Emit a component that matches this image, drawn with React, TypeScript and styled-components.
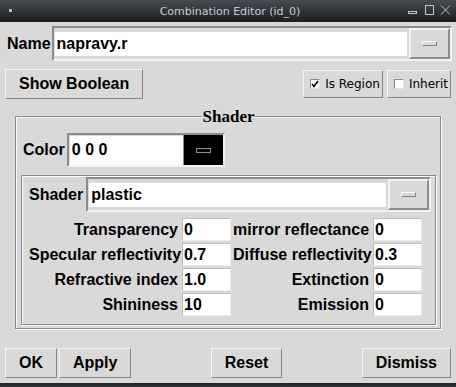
import React from 'react';
import styled, { createGlobalStyle } from 'styled-components';

const GlobalStyle = createGlobalStyle`
  html, body {
    margin: 0;
    padding: 0;
    background: #1b1e22;
  }
  #root {
    width: 456px;
    height: 387px;
  }
`;

const Window = styled.div`
  width: 456px;
  height: 387px;
  display: flex;
  flex-direction: column;
  background: #d9d9d9;
  overflow: hidden;
`;

const TitleBar = styled.div`
  height: 22px;
  flex: none;
  display: grid;
  grid-template-columns: 1fr auto 1fr;
  align-items: center;
  background: linear-gradient(#474c53, #1a1d21);
  color: #c8cbcf;
  font: 11px "DejaVu Sans", sans-serif;
  padding: 0 5px 0 9px;
`;

const TitleText = styled.div`
  text-align: center;
  white-space: nowrap;
`;

const WinControls = styled.div`
  display: flex;
  justify-content: flex-end;
`;

const Body = styled.div`
  flex: 1;
  display: flex;
  flex-direction: column;
  padding: 4px 5px 5px 5px;
  font-family: "Liberation Sans", Arial, sans-serif;
  color: #000;
`;

const BottomEdge = styled.div`
  height: 4px;
  flex: none;
  background: linear-gradient(#1f2327, #2f343a);
`;

const Label = styled.div`
  font-weight: bold;
  font-size: 16px;
  white-space: nowrap;
`;

const NameRow = styled.div`
  display: flex;
  align-items: center;
  gap: 1px;
  padding-left: 2px;
  margin-right: -1px;
`;

const SunkenFrame = styled.div<{ $w?: number }>`
  box-sizing: border-box;
  height: ${p => (p.$w ? 34 : 35)}px;
  ${p => (p.$w ? `width: ${p.$w}px;` : 'flex: 1;')}
  display: flex;
  align-items: stretch;
  border: 2px solid;
  border-color: #8b8b8b #f2f2f2 #f2f2f2 #8b8b8b;
`;

const Entry = styled.div`
  flex: 1;
  align-self: center;
  height: 24px;
  margin-left: 1px;
  padding-left: 2px;
  background: #fff;
  font-weight: bold;
  font-size: 16px;
  line-height: 24px;
`;

const MenuButton = styled.div`
  box-sizing: border-box;
  width: 41px;
  margin-left: 2px;
  display: flex;
  align-items: center;
  justify-content: center;
  border: 2px solid;
  border-color: #f4f4f4 #8b8b8b #8b8b8b #f4f4f4;
`;

const Indicator = styled.span`
  box-sizing: border-box;
  width: 15px;
  height: 5px;
  border: 1px solid;
  border-color: #fafafa #7f7f7f #7f7f7f #fafafa;
  background: #d9d9d9;
`;

const ActionRow = styled.div`
  display: flex;
  align-items: center;
  margin-top: 8px;
`;

const Button = styled.div`
  box-sizing: border-box;
  height: 30px;
  padding: 0 13px;
  display: flex;
  align-items: center;
  justify-content: center;
  border: 1px solid;
  border-color: #f6f6f6 #858585 #858585 #f6f6f6;
  font-weight: bold;
  font-size: 16px;
  white-space: nowrap;
`;

const Spacer = styled.div`
  flex: 1;
`;

const CheckButton = styled.div`
  box-sizing: border-box;
  height: 28px;
  padding: 0 2px 0 6px;
  margin-left: 4px;
  display: flex;
  align-items: center;
  gap: 5px;
  border: 1px solid;
  border-color: #f6f6f6 #858585 #858585 #f6f6f6;
  font: 12px "DejaVu Sans", sans-serif;
  white-space: nowrap;
`;

const CheckBox = styled.span`
  box-sizing: border-box;
  width: 10px;
  height: 10px;
  display: flex;
  align-items: center;
  justify-content: center;
  background: #fff;
  border: 1px solid;
  border-color: #8b8b8b #e6e6e6 #e6e6e6 #8b8b8b;
`;

const GroupBox = styled.fieldset`
  margin: 8px 10px 0 10px;
  padding: 0 4px 3px 5px;
  border: 1px solid #8b8b8b;
  box-shadow: inset 1px 1px 0 #fdfdfd, 1px 1px 0 #fdfdfd;
`;

const GroupTitle = styled.legend`
  margin: 0 auto;
  padding: 0 1px;
  background: #d9d9d9;
  font: bold 17px "Liberation Serif", "Times New Roman", serif;
  line-height: 19px;
`;

const ColorRow = styled.div`
  display: flex;
  align-items: center;
  gap: 2px;
  padding-left: 2px;
  margin-top: 7px;
`;

const ColorEntry = styled.div`
  flex: 1;
  margin: 1px 0 0 1px;
  background: #fff;
  font-weight: bold;
  font-size: 16px;
  line-height: 28px;
  padding-left: 2px;
`;

const Swatch = styled.div`
  width: 39px;
  display: flex;
  align-items: center;
  justify-content: center;
  background: #000;
  border-left: 1px solid #8b8b8b;
`;

const SwatchMark = styled.span`
  box-sizing: border-box;
  width: 15px;
  height: 5px;
  border: 1px solid #8f8f8f;
`;

const InnerBox = styled.div`
  margin-top: 8px;
  padding: 1px 4px 8px 7px;
  border: 1px solid #8b8b8b;
  box-shadow: inset 1px 1px 0 #fdfdfd, 1px 1px 0 #fdfdfd;
`;

const ShaderRow = styled.div`
  display: flex;
  align-items: center;
  gap: 3px;
`;

const ParamGrid = styled.div`
  display: grid;
  grid-template-columns: 151px 49px 138px 49px;
  grid-auto-rows: 23px;
  column-gap: 2px;
  row-gap: 2px;
  margin-top: 6px;
`;

const ParamLabel = styled(Label)`
  text-align: right;
  line-height: 23px;
  padding-right: 2px;
`;

const ParamEntry = styled.div`
  box-sizing: border-box;
  background: #fff;
  border: 1px solid;
  border-color: #bdbdbd #ececec #ececec #bdbdbd;
  font-weight: bold;
  font-size: 16px;
  line-height: 21px;
  padding-left: 1px;
`;

const FooterRow = styled.div`
  margin-top: auto;
  display: flex;
  justify-content: space-between;
`;

const ButtonPair = styled.div`
  display: flex;
  gap: 2px;
`;

const params: [string, string, string, string][] = [
  ['Transparency', '0', 'mirror reflectance', '0'],
  ['Specular reflectivity', '0.7', 'Diffuse reflectivity', '0.3'],
  ['Refractive index', '1.0', 'Extinction', '0'],
  ['Shininess', '10', 'Emission', '0'],
];

export default function App() {
  return (
    <Window>
      <GlobalStyle />
      <TitleBar>
        <svg width="4" height="4">
          <rect x="0" y="0" width="3" height="3" fill="#b4b8bd" />
        </svg>
        <TitleText>Combination Editor (id_0)</TitleText>
        <WinControls>
          <svg width="46" height="12" viewBox="0 0 46 12" fill="none" stroke="#c4c8cc" strokeWidth="1">
            <rect x="3.5" y="6.5" width="8" height="2" />
            <rect x="20.5" y="0.5" width="8" height="9" />
            <path d="M36 0.5 L45 9.5 M45 0.5 L36 9.5" />
          </svg>
        </WinControls>
      </TitleBar>
      <Body>
        <NameRow>
          <Label>Name</Label>
          <SunkenFrame>
            <Entry>napravy.r</Entry>
            <MenuButton>
              <Indicator />
            </MenuButton>
          </SunkenFrame>
        </NameRow>
        <ActionRow>
          <Button>Show Boolean</Button>
          <Spacer />
          <CheckButton>
            <CheckBox>
              <svg width="8" height="8" viewBox="0 0 8 8">
                <path d="M1 4 L3 6.5 L7 1" fill="none" stroke="#000" strokeWidth="1.6" />
              </svg>
            </CheckBox>
            Is Region
          </CheckButton>
          <CheckButton>
            <CheckBox />
            Inherit
          </CheckButton>
        </ActionRow>
        <GroupBox>
          <GroupTitle>Shader</GroupTitle>
          <ColorRow>
            <Label>Color</Label>
            <SunkenFrame $w={158}>
              <ColorEntry>0 0 0</ColorEntry>
              <Swatch>
                <SwatchMark />
              </Swatch>
            </SunkenFrame>
          </ColorRow>
          <InnerBox>
            <ShaderRow>
              <Label>Shader</Label>
              <SunkenFrame>
                <Entry>plastic</Entry>
                <MenuButton>
                  <Indicator />
                </MenuButton>
              </SunkenFrame>
            </ShaderRow>
            <ParamGrid>
              {params.map(([l1, v1, l2, v2]) => (
                <React.Fragment key={l1}>
                  <ParamLabel>{l1}</ParamLabel>
                  <ParamEntry>{v1}</ParamEntry>
                  <ParamLabel>{l2}</ParamLabel>
                  <ParamEntry>{v2}</ParamEntry>
                </React.Fragment>
              ))}
            </ParamGrid>
          </InnerBox>
        </GroupBox>
        <FooterRow>
          <ButtonPair>
            <Button>OK</Button>
            <Button>Apply</Button>
          </ButtonPair>
          <Button>Reset</Button>
          <Button>Dismiss</Button>
        </FooterRow>
      </Body>
      <BottomEdge />
    </Window>
  );
}
